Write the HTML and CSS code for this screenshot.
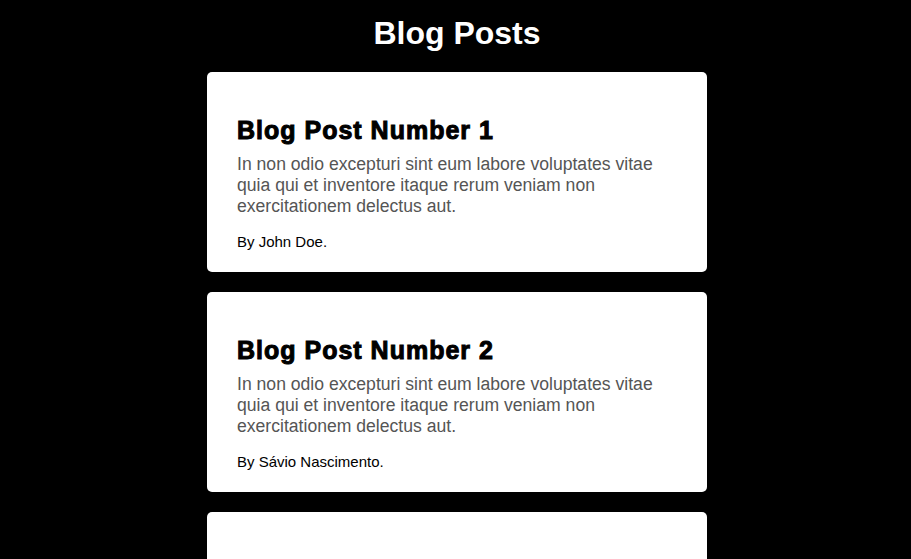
FILE: index.html
```html
<!DOCTYPE html>
<html lang="en">
<head>
<meta charset="utf-8">
<title>Blog Posts</title>
<link rel="stylesheet" href="styles.css">
</head>
<body>
<main class="page">
  <h1 class="page-title">Blog Posts</h1>
  <article class="card">
    <h2 class="card-title">Blog Post Number 1</h2>
    <p class="card-text">In non odio excepturi sint eum labore voluptates vitae quia qui et inventore itaque rerum veniam non exercitationem delectus aut.</p>
    <p class="card-author">By John Doe.</p>
  </article>
  <article class="card">
    <h2 class="card-title">Blog Post Number 2</h2>
    <p class="card-text">In non odio excepturi sint eum labore voluptates vitae quia qui et inventore itaque rerum veniam non exercitationem delectus aut.</p>
    <p class="card-author">By Sávio Nascimento.</p>
  </article>
  <article class="card">
    <h2 class="card-title">Blog Post Number 3</h2>
    <p class="card-text">In non odio excepturi sint eum labore voluptates vitae quia qui et inventore itaque rerum veniam non exercitationem delectus aut.</p>
    <p class="card-author">By John Doe.</p>
  </article>
</main>
</body>
</html>
```
FILE: styles.css
```css
html, body {
  margin: 0;
  padding: 0;
  background: #000;
}
body {
  font-family: "Liberation Sans", Arial, sans-serif;
}
.page {
  display: flex;
  flex-direction: column;
  align-items: center;
  gap: 20px;
  padding: 15px 0 20px 3px;
}
.page-title {
  margin: 0;
  color: #fff;
  font-size: 32px;
  line-height: 37px;
  font-weight: bold;
}
.card {
  box-sizing: border-box;
  width: 500px;
  background: #fff;
  border-radius: 5px;
  padding: 44px 30px 21px;
}
.card-title {
  margin: 0 0 10px;
  font-size: 25px;
  line-height: 28px;
  font-weight: bold;
  color: #000;
  letter-spacing: 1px;
  -webkit-text-stroke: 1px #000;
}
.card-text {
  margin: 0 0 16px;
  font-size: 17.6px;
  line-height: 21px;
  color: #555;
}
.card-author {
  margin: 0;
  font-size: 15px;
  line-height: 18px;
  color: #000;
}
```
